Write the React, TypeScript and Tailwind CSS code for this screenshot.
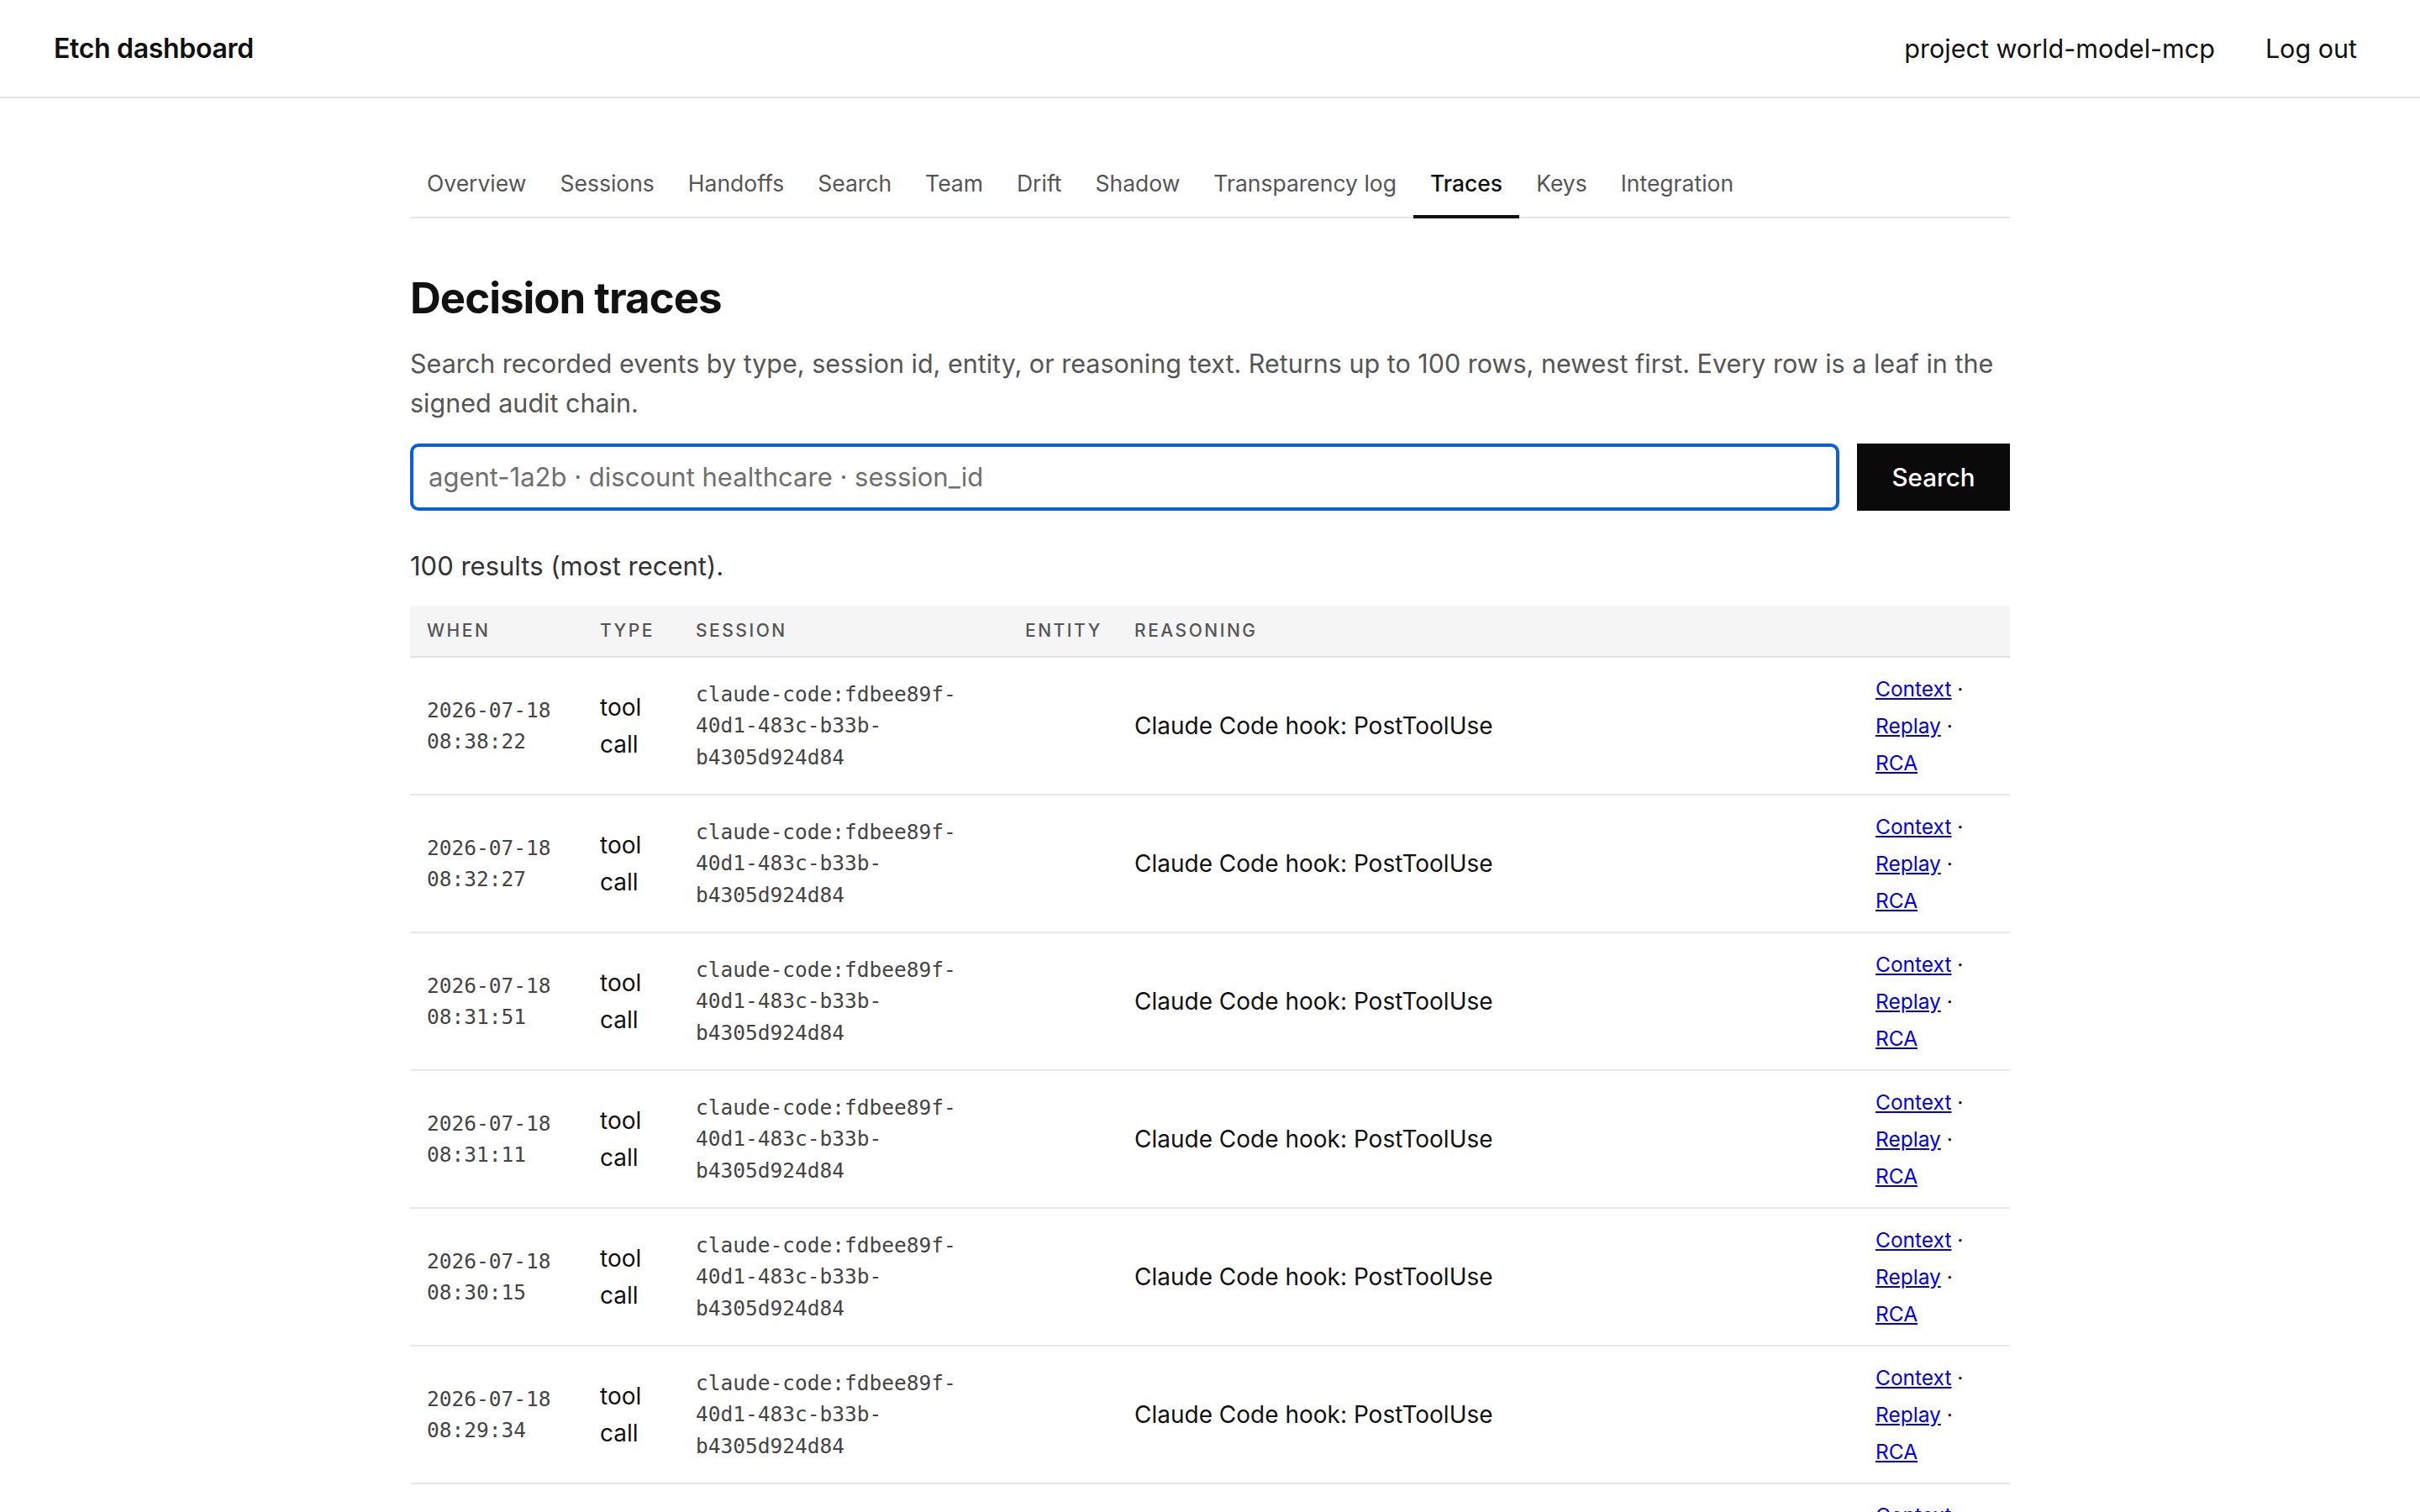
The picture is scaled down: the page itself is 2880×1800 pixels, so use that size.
import type { ReactNode } from 'react'

const tabs = [
  'Overview',
  'Sessions',
  'Handoffs',
  'Search',
  'Team',
  'Drift',
  'Shadow',
  'Transparency log',
  'Traces',
  'Keys',
  'Integration',
]

const rows = [
  { date: '2026-07-18', time: '08:38:22' },
  { date: '2026-07-18', time: '08:32:27' },
  { date: '2026-07-18', time: '08:31:51' },
  { date: '2026-07-18', time: '08:31:11' },
  { date: '2026-07-18', time: '08:30:15' },
  { date: '2026-07-18', time: '08:29:34' },
  { date: '2026-07-18', time: '08:28:50' },
  { date: '2026-07-18', time: '08:27:12' },
]

const session = 'claude-code:fdbee89f-40d1-483c-b33b-b4305d924d84'

function Th({ children }: { children?: ReactNode }) {
  return (
    <th className="px-[20px] py-[16px] text-left text-[21px] leading-[28px] font-medium tracking-[0.12em] text-[#555] uppercase">
      {children}
    </th>
  )
}

function TraceRow({ date, time }: { date: string; time: string }) {
  return (
    <tr className="border-b-2 border-[#e6e6e6]">
      <td className="px-[20px] py-[15px] align-middle font-['DejaVu_Sans_Mono',monospace] text-[24.5px] leading-[37.5px] text-[#444]">
        {date}
        <br />
        {time}
      </td>
      <td className="px-[20px] py-[15px] align-middle text-[28px] leading-[44px] text-[#111]">
        tool call
      </td>
      <td className="px-[20px] py-[15px] align-middle font-['DejaVu_Sans_Mono',monospace] text-[24.5px] leading-[37.5px] break-words text-[#444]">
        {session}
      </td>
      <td className="px-[20px] py-[15px] align-middle" />
      <td className="px-[20px] py-[15px] align-middle text-[28px] leading-[44px] text-[#111]">
        Claude Code hook: PostToolUse
      </td>
      <td className="px-[20px] py-[15px] align-middle text-[24.5px] leading-[44px] text-[#111]">
        <a href="#" className="text-[#0000ee] underline">
          Context
        </a>{' '}
        ·{' '}
        <a href="#" className="text-[#0000ee] underline">
          Replay
        </a>{' '}
        ·{' '}
        <a href="#" className="text-[#0000ee] underline">
          RCA
        </a>
      </td>
    </tr>
  )
}

export default function App() {
  return (
    <div className="min-h-screen bg-white font-['Inter','Liberation_Sans',sans-serif] text-[#111]">
      <header className="flex h-[117px] items-center justify-between border-b-2 border-[#e5e5e5] pr-[63px] pl-[64px]">
        <span className="text-[32px] font-semibold tracking-[-0.01em]">Etch dashboard</span>
        <div className="flex items-center gap-[48px] text-[30.5px]">
          <span>project world-model-mcp</span>
          <button type="button" className="px-[12px] text-[30.5px]">
            Log out
          </button>
        </div>
      </header>

      <main className="mx-auto w-[1904px] pt-[61px]">
        <nav className="flex border-b-2 border-[#e5e5e5]">
          {tabs.map((t) => (
            <span
              key={t}
              className={`-mb-[2px] px-[20px] pt-[20px] pb-[18px] text-[26.5px] leading-[40px] ${
                t === 'Traces'
                  ? 'border-b-4 border-[#111] font-medium text-[#111]'
                  : 'border-b-4 border-transparent text-[#555]'
              }`}
            >
              {t}
            </span>
          ))}
        </nav>

        <h1 className="mt-[62px] text-[51px] leading-[65px] font-bold tracking-[-0.02em]">
          Decision traces
        </h1>
        <p className="mt-[22px] text-[30.5px] leading-[47px] text-[#555]">
          Search recorded events by type, session id, entity, or reasoning text. Returns up to 100
          rows, newest first. Every row is a leaf in the signed audit chain.
        </p>

        <div className="mt-[25px] flex h-[80px] gap-[21px]">
          <input
            type="text"
            placeholder="agent-1a2b · discount healthcare · session_id"
            className="min-w-0 flex-1 rounded-[10px] border-[4px] border-[#0a60d8] px-[18px] text-[31px] text-[#111] outline-none placeholder:text-[#6f6f6f]"
          />
          <button
            type="button"
            className="w-[182px] bg-[#0a0a0a] text-[29.5px] font-medium text-white"
          >
            Search
          </button>
        </div>

        <p className="mt-[43px] text-[31px] leading-[45px] text-[#333]">
          100 results (most recent).
        </p>

        <table className="mt-[25px] w-full table-fixed border-collapse">
          <colgroup>
            <col className="w-[206px]" />
            <col className="w-[114px]" />
            <col className="w-[392px]" />
            <col className="w-[130px]" />
            <col className="w-[882px]" />
            <col className="w-[180px]" />
          </colgroup>
          <thead>
            <tr className="border-b-2 border-[#e2e2e2] bg-[#f5f5f5]">
              <Th>When</Th>
              <Th>Type</Th>
              <Th>Session</Th>
              <Th>Entity</Th>
              <Th>Reasoning</Th>
              <Th />
            </tr>
          </thead>
          <tbody>
            {rows.map((r) => (
              <TraceRow key={r.time} date={r.date} time={r.time} />
            ))}
          </tbody>
        </table>
      </main>
    </div>
  )
}
